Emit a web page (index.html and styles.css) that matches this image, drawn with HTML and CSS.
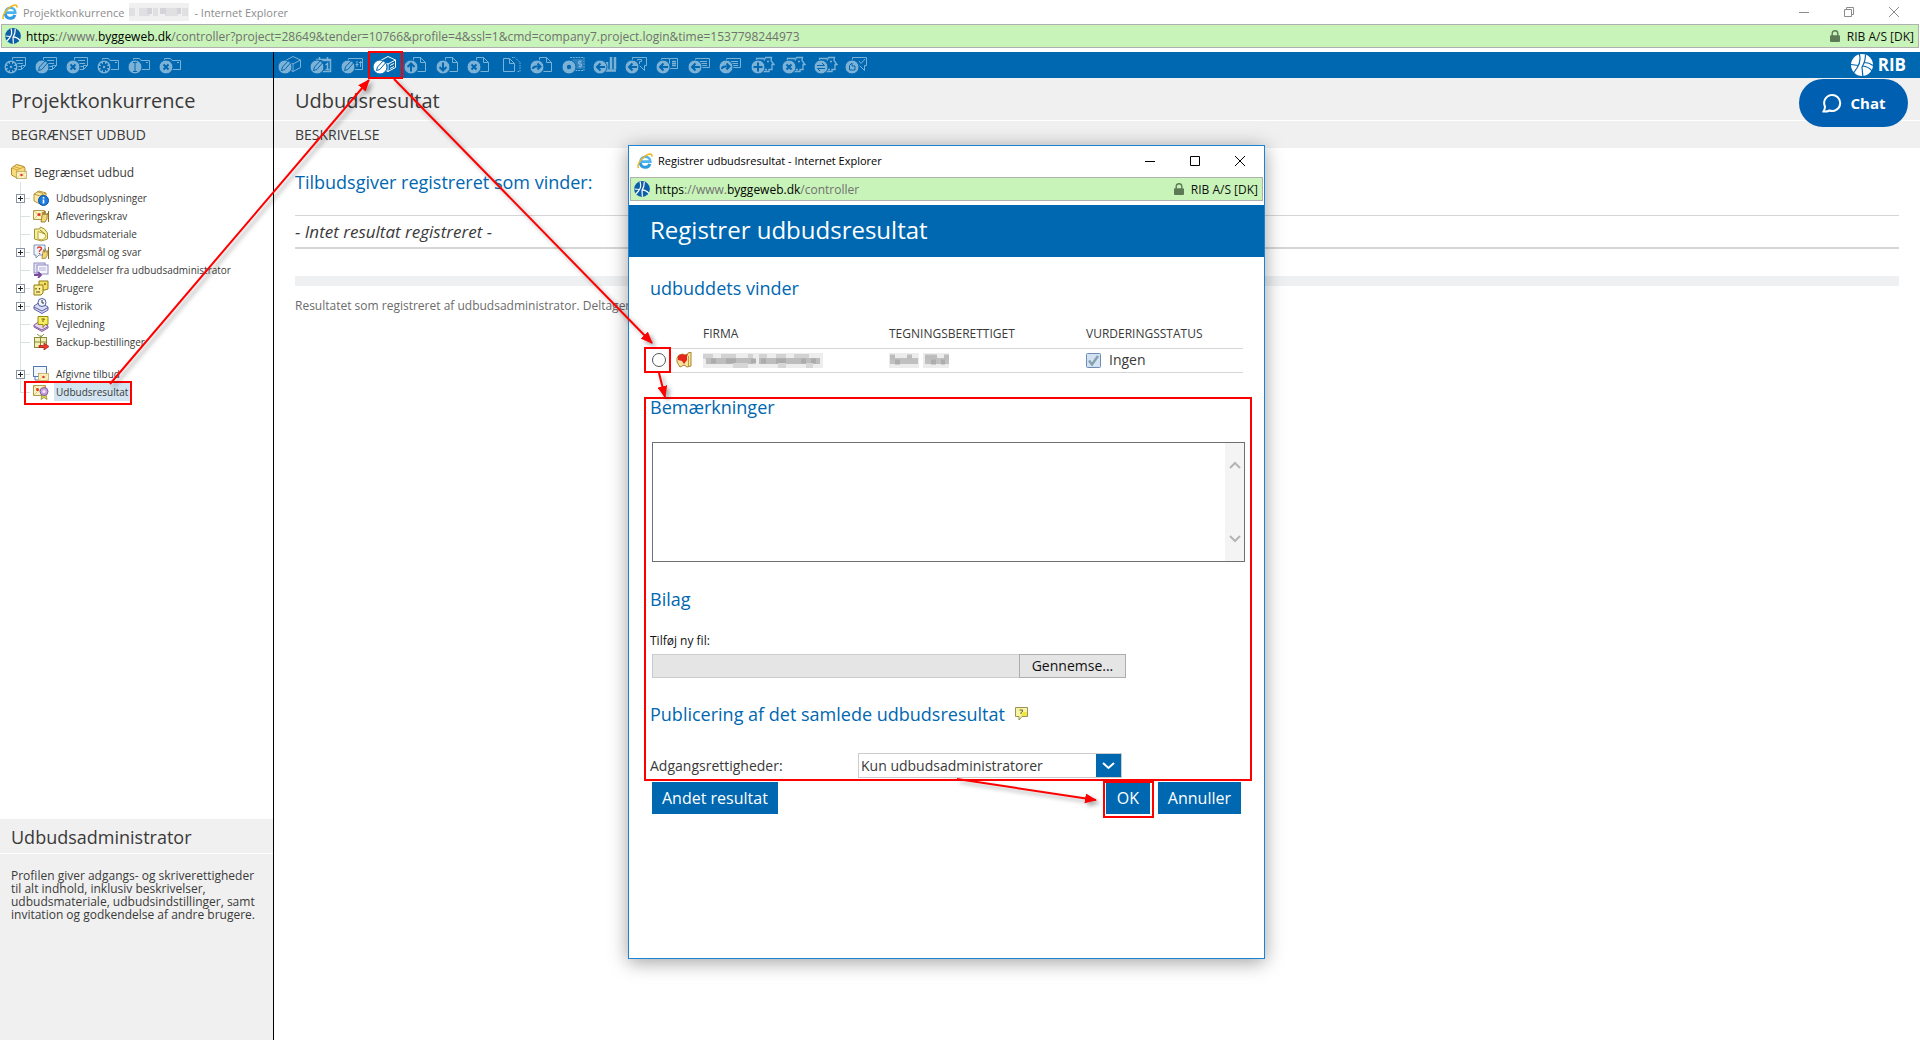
FILE: index.html
```html
<!DOCTYPE html>
<html lang="da">
<head>
<meta charset="utf-8">
<title>Projektkonkurrence - Internet Explorer</title>
<link rel="stylesheet" href="styles.css">
</head>
<body>
<svg class="defs" aria-hidden="true">
  <defs>
    <symbol id="ie" viewBox="0 0 16 16">
      <path d="M3.400 9.500a4.800 4.800 0 0 0 9.400 1.400" fill="none" stroke="#2f9be0" stroke-width="3"/>
      <path d="M3.500 8.600a4.900 4.900 0 0 1 9.800 0z" fill="none" stroke="#4cb4ee" stroke-width="2.600"/>
      <path d="M1.600 15C-.6 12.600 3.500 6 8 3.200S15.300 .3 15 3.600" fill="none" stroke="#f2b61c" stroke-width="1.500"/>
    </symbol>
    <symbol id="globe" viewBox="0 0 16 16">
      <circle cx="8" cy="8" r="7.900" fill="#0b5ea8"/>
      <path d="M6 .5C7.200 4 7 7 4.500 10L2 13M10.300 .8C10.300 4 10 6.500 8 9.300L8.400 15.800M8.300 8.800C11 9 13.500 10.500 15 12.500M5.500 8.500L.5 8" fill="none" stroke="#fff" stroke-width="1.200"/>
    </symbol>
    <symbol id="lock" viewBox="0 0 10 12"><path d="M2.200 6V3.500a2.800 2.800 0 0 1 5.600 0V6" fill="none" stroke="#5d7a57" stroke-width="1.400"/><rect y="5.200" width="10" height="6.800" rx="1" fill="#5d7a57"/></symbol>

    <!-- toolbar: outlines behind the round badge -->
    <symbol id="b-note" viewBox="0 0 24 18"><path d="M8.500 7V1.500h13v8l-4 4h-5M21.500 9.500h-4v4M12 4.500h7M13 7.500h6M14 10.500h3" /></symbol>
    <symbol id="b-folder" viewBox="0 0 24 18"><path d="M5.500 5V2.500h6l1.500 2h8.500v9h-8M18 6.500h2" /></symbol>
    <symbol id="b-box" viewBox="0 0 24 18"><path d="M7.500 4.500l7.500-4 7.500 3.500v7.500L15 15.500l-2-1M7.500 4.500L15 8l7.500-4M15 8v7.500" /></symbol>
    <symbol id="b-cal" viewBox="0 0 24 18"><path d="M6.500 6V3.500h14v12h-8M9.500 1v3M17.500 1v3M7 4.500h13" stroke-width="1.500"/><path d="M15.500 9l2-1.500v6M15.500 13.500h4" stroke-width="1.500"/></symbol>
    <symbol id="b-slide" viewBox="0 0 24 18"><path d="M7.500 5V2.500h14v11h-8M16 5v6M14.500 8.500h3M19.500 5v6M18 6.500h3" /></symbol>
    <symbol id="b-page" viewBox="0 0 24 18"><path d="M9.500 5V1.500h7l5 5v9h-8M16.500 1.500v5h5" /></symbol>
    <symbol id="b-copy" viewBox="0 0 24 18"><path d="M4.500 2.500h6l5 5v8h-11zM10.500 2.500v5h5"/><path d="M13 1.500h3l5 5v9h-3" stroke-dasharray="1.500 1"/></symbol>
    <symbol id="b-money" viewBox="0 0 24 18"><path d="M8 1.500h14v13H12" stroke-dasharray="2 .8"/><path d="M10 3h11v10H11z" fill="currentColor" fill-opacity=".35" stroke="none"/><path d="M19.500 5.500h-3v2.500h3v2.500h-3M18 4v8" /></symbol>
    <symbol id="b-bars" viewBox="0 0 24 18"><path d="M14 13V6M18 13V1M22 13V1M11 14.500h12" stroke-width="2.500"/></symbol>
    <symbol id="b-ask" viewBox="0 0 24 18"><path d="M7.500 5V1.500h14v8h-2v5l-5-5M12.500 4.500V3.500h4v2h-2V8" /></symbol>
    <symbol id="b-book" viewBox="0 0 24 18"><path d="M5.500 5V2.500h8v9M13.500 2.500h8v10h-8" /><path d="M16 5.500h4M16 7.500h4M16 9.500h4" stroke-width="1.400"/></symbol>
    <symbol id="b-msg" viewBox="0 0 24 18"><path d="M7.500 5V2.500h14v9h-8M12 5.500h7M13 7.500h6M14 9.500h5" /></symbol>
    <symbol id="b-head" viewBox="0 0 24 18"><path d="M5.500 5V2.500h7.500M13 4.500l1.500-3h6l-.5 3 3 4h-2v5h-3v2h-6M16 5.500h2M12 13.500h4" stroke-width="1.300"/></symbol>
    <symbol id="b-ok" viewBox="0 0 24 18"><path d="M7.500 5V1.500h14v8h-2v5l-5-5M14 5l2 2.500 4-4.500" /></symbol>

    <!-- toolbar: round badges -->
    <symbol id="d-pen" viewBox="0 0 24 18"><circle class="disc" cx="7" cy="11" r="7"/><path class="cut thin" d="M3.500 14.500l1-3.500 6.500-7 2.300 2-6.500 7.500z"/></symbol>
    <symbol id="d-gear" viewBox="0 0 24 18"><circle class="disc" cx="7" cy="11" r="7"/><circle class="cut" cx="7" cy="11" r="2.200"/><path class="cut" d="M7 6v2M7 14v2M2 11h2M10 11h2M3.500 7.500l1.400 1.400M9.100 13.100l1.400 1.400M10.500 7.500L9.100 8.900M4.900 13.100l-1.400 1.400"/></symbol>
    <symbol id="d-x" viewBox="0 0 24 18"><circle class="disc" cx="7" cy="11" r="7"/><path class="cut" d="M4.500 8.500l5 5M9.500 8.500l-5 5"/></symbol>
    <symbol id="d-i" viewBox="0 0 24 18"><circle class="disc" cx="7" cy="11" r="7"/><path class="cut thin" d="M5 6.500h4M5 15.500h4M7 6.500v9"/></symbol>
    <symbol id="d-up" viewBox="0 0 24 18"><circle class="disc" cx="7" cy="11" r="7"/><path class="cut" d="M7 15.500V8M3.500 11L7 7.500l3.500 3.500"/></symbol>
    <symbol id="d-down" viewBox="0 0 24 18"><circle class="disc" cx="7" cy="11" r="7"/><path class="cut" d="M7 6.500V14M3.500 11L7 14.500l3.500-3.500"/></symbol>
    <symbol id="d-right" viewBox="0 0 24 18"><circle class="disc" cx="7" cy="11" r="7"/><path class="cut" d="M3 13c0-2 1-2.500 3-2.500h3.500M7.500 7.500l3 3-3 3"/></symbol>
    <symbol id="d-left" viewBox="0 0 24 18"><circle class="disc" cx="7" cy="11" r="7"/><path class="cut" d="M12 11H4.500M7.500 7.500L4 11l3.500 3.500"/></symbol>
    <symbol id="d-dot" viewBox="0 0 24 18"><circle class="disc" cx="7" cy="11" r="7"/><circle class="cut" cx="7" cy="11" r="1.200"/></symbol>
    <symbol id="d-plus" viewBox="0 0 24 18"><circle class="disc" cx="7" cy="11" r="7"/><path class="cut" d="M7 6.500v9M2.500 11h9"/></symbol>
    <symbol id="d-swap" viewBox="0 0 24 18"><circle class="disc" cx="7" cy="11" r="7"/><path class="cut thin" d="M3 9.500h7.500L8 7M11 12.500H3.500L6 15"/></symbol>
    <symbol id="d-hand" viewBox="0 0 24 18"><circle class="disc" cx="7" cy="11" r="7"/><path class="cut thin" d="M4.500 14V9.500L7 7v3h3v4z"/></symbol>

    <!-- tree icons -->
    <symbol id="t-env" viewBox="0 0 16 12"><rect x=".5" y=".5" width="15" height="11" fill="#fbf3c4" stroke="#b39a4a"/><path d="M1 1l7 6 7-6M1 11l5-5M15 11l-5-5" fill="none" stroke="#dcc87a"/><circle cx="8" cy="6" r="1.800" fill="#e3341f"/></symbol>
    <symbol id="t-root" viewBox="0 0 16 16"><path d="M.5 4l5-3.500L13 2.500l1 2v5L6 14 .5 11z" fill="#f8dc7c" stroke="#b5882c"/><path d="M1 4l5 2 7-3M3 2.500l6 2M6 6v7" fill="none" stroke="#d5a83c"/><use href="#t-env" x="5" y="7" width="11" height="8"/></symbol>
    <symbol id="t-info" viewBox="0 0 16 16"><path d="M1 4l5-3 7 2v7l-6 4-6-3z" fill="#fbe9a6" stroke="#b5953c"/><path d="M1 4l6 2 6-3M4 1.500l6 2" fill="none" stroke="#b5953c"/><circle cx="10.500" cy="10.500" r="5" fill="#1c7be0" stroke="#0b4fa5"/><path d="M10.500 7v1.500M10.500 9.500v4" stroke="#fff" stroke-width="1.600"/></symbol>
    <symbol id="t-hand" viewBox="0 0 8 12"><path d="M1 11L2 5l1-4 1 3 1-4 1 4 1.500-2-.5 6-2 3z" fill="#f3d976" stroke="#8c6d1c" stroke-width=".8"/></symbol>
    <symbol id="t-req" viewBox="0 0 16 16"><path d="M.5 2.500h11v9H.5z" fill="#fbf3c4" stroke="#b39a4a"/><path d="M1 3l5 4 5-4M1 11l4-4M11 11L7 7" fill="none" stroke="#dcc87a"/><circle cx="6" cy="6.500" r="1.500" fill="#e3341f"/><use href="#t-hand" x="7" y="3" width="8" height="12"/><path d="M15.500 3v11" stroke="#8c6d1c"/></symbol>
    <symbol id="t-mat" viewBox="0 0 16 16"><path d="M1.500 3h5l1-2 4 2 3 4v6l-6 2-7-2z" fill="#f6ee9f" stroke="#a29436"/><path d="M5 5.500l7 2.500 1 3-4 3-4-1z" fill="#fffbd6" stroke="#b9a743"/><path d="M7 4l5 4" stroke="#8c7d2b"/></symbol>
    <symbol id="t-qa" viewBox="0 0 16 16"><path d="M1 1h11v10H6l-3 3v-3H1z" fill="#edf3fb" stroke="#7d94b5"/><path d="M4.500 4.500C4.500 2.500 8.500 2.500 8.500 5L6.500 7v1M6.500 9v1" fill="none" stroke="#e03a2e" stroke-width="1.400"/><use href="#t-hand" x="8" y="4" width="7" height="12"/><path d="M15.500 3v12" stroke="#8c6d1c"/></symbol>
    <symbol id="t-news" viewBox="0 0 16 16"><rect x="1" y="1" width="11" height="10" fill="#e6e4f5" stroke="#8e8abf"/><rect x="4" y="3" width="11" height="9" fill="#f6f6ff" stroke="#8e8abf"/><path d="M6 6h7M6 8h7" stroke="#b3b0d8"/><path d="M1 13h6M5 10l3 3-3 3" fill="none" stroke="#7b4a9c" stroke-width="1.800"/></symbol>
    <symbol id="t-users" viewBox="0 0 16 16"><path d="M6 1h9v8l-3 1H6z" fill="#f7e163" stroke="#8f7a14"/><path d="M1 5h9v8l-2 2H1z" fill="#fbee95" stroke="#8f7a14"/><path d="M3 8v1.500M6.500 8v1.500M3 12h4M12 3v2" stroke="#57490a" stroke-width="1.200"/></symbol>
    <symbol id="t-hist" viewBox="0 0 16 16"><path d="M1 8l6-4 8 5v3l-6 3.500L1 11z" fill="#d9dbf3" stroke="#5b61a8"/><path d="M1 9l8 4 6-3.500" fill="none" stroke="#5b61a8"/><circle cx="9" cy="4.500" r="4" fill="#f2f5fc" stroke="#4b5f9e"/><path d="M9 2v3h2" fill="none" stroke="#333"/></symbol>
    <symbol id="t-guide" viewBox="0 0 16 16"><path d="M1 9l6-4 8 5v2l-6 3.500L1 11z" fill="#e6d4ef" stroke="#845a9e"/><path d="M1 10l8 4 6-3.500" fill="none" stroke="#845a9e"/><path d="M5 .5h10v8h-3l-2 3v-3H5z" fill="#f6ee5e" stroke="#958a17"/><path d="M8.500 3h3L10 4.500V6" fill="none" stroke="#5c5508"/></symbol>
    <symbol id="t-backup" viewBox="0 0 16 16"><path d="M4 0l4 3 3-3M8 1v3" fill="none" stroke="#8e9a4a"/><rect x="1.500" y="3.500" width="12" height="10" fill="#f4efb5" stroke="#8a8a3f"/><path d="M1 8h13M7.500 4v9" stroke="#8a8a3f"/><path d="M6 11.500h5V9l5 3.500-5 3.500v-2.500H6z" fill="#ef3a2d" stroke="#a51b12" stroke-width=".7"/></symbol>
    <symbol id="t-offers" viewBox="0 0 16 16"><rect x=".5" y=".5" width="13" height="10" fill="#f1f6fd" stroke="#5579ad"/><path d="M2 11v3h3" fill="none" stroke="#5579ad"/><use href="#t-env" x="5" y="7" width="11" height="8"/></symbol>
    <symbol id="t-result" viewBox="0 0 16 16"><path d="M.5 1.500h12v10H.5z" fill="#fbf3c4" stroke="#b39a4a"/><path d="M1 2l5 5 6-5M1 11l4-4" fill="none" stroke="#dcc87a"/><circle cx="4.500" cy="5.500" r="1.500" fill="#e3341f"/><path d="M9 10l-1 5.500 3-2 3 2-1-5.500z" fill="#d9d052" stroke="#8b8423" stroke-width=".7"/><circle cx="11" cy="7.500" r="4" fill="#c8a2dd" stroke="#815b9b"/><circle cx="11" cy="7.500" r="1.600" fill="#f0e1f8"/></symbol>
    <symbol id="i-firm" viewBox="0 0 16 16"><path d="M1 6l2-3 4-1 4 2 1-3 3-1v14l-4 1-3-2-4 2-3-5z" fill="#f7e3a0" stroke="#a9822d"/><path d="M2 4l4-2 2 1 3-1v6l-3 4-2-3-4-1z" fill="#e5261b"/><path d="M12.500 4v10" stroke="#c19a3a"/></symbol>
  </defs>
</svg>

<header class="titlebar titlebar-main">
  <svg class="ico16"><use href="#ie"/></svg>
  <span>Projektkonkurrence</span>
  <svg class="mask-title" viewBox="0 0 60 18"><rect width="60" height="18" fill="#f0f0f1"/><path d="M0 9h60" stroke="#e0e0e3" stroke-width="8" stroke-dasharray="6 4 11 3 5 7 13 4"/><path d="M18 8h42" stroke="#d3d4d9" stroke-width="6" stroke-dasharray="5 8 6 11 4 9"/></svg>
  <span class="grow">- Internet Explorer</span>
  <div class="winbtns">
    <button type="button" aria-label="Minimer"><svg viewBox="0 0 10 10"><path d="M0 5.500h10"/></svg></button>
    <button type="button" aria-label="Gendan"><svg viewBox="0 0 10 10"><path d="M.5 2.500h7v7h-7zM2.500 2.500v-2h7v7h-2"/></svg></button>
    <button type="button" aria-label="Luk"><svg viewBox="0 0 10 10"><path d="M0 0l10 10M10 0L0 10"/></svg></button>
  </div>
</header>
<div class="address">
  <svg class="ico16"><use href="#globe"/></svg>
  <span class="url"><span class="k">https</span>://www.<span class="k">byggeweb.dk</span>/controller?project=28649&amp;tender=10766&amp;profile=4&amp;ssl=1&amp;cmd=company7.project.login&amp;time=1537798244973</span>
  <svg class="lock"><use href="#lock"/></svg><span class="cert">RIB A/S [DK]</span>
</div>

<div class="app">
  <aside class="side">
    <nav class="tools tools-side" aria-label="Projekt">
      <button type="button"><svg><use href="#b-note"/><use href="#d-gear"/></svg></button>
      <button type="button"><svg><use href="#b-note"/><use href="#d-pen"/></svg></button>
      <button type="button"><svg><use href="#b-note"/><use href="#d-x"/></svg></button>
      <button type="button"><svg><use href="#b-folder"/><use href="#d-gear"/></svg></button>
      <button type="button"><svg><use href="#b-folder"/><use href="#d-i"/></svg></button>
      <button type="button"><svg><use href="#b-folder"/><use href="#d-x"/></svg></button>
    </nav>
    <h1 class="band-title">Projektkonkurrence</h1>
    <div class="band-sub">BEGRÆNSET UDBUD</div>
    <div class="tree">
      <a class="root" href="#"><svg class="ico16"><use href="#t-root"/></svg>Begrænset udbud</a>
      <ul>
        <li><button class="exp" type="button" aria-label="Udvid"></button><svg class="ico16"><use href="#t-info"/></svg><a href="#">Udbudsoplysninger</a></li>
        <li><svg class="ico16"><use href="#t-req"/></svg><a href="#">Afleveringskrav</a></li>
        <li><svg class="ico16"><use href="#t-mat"/></svg><a href="#">Udbudsmateriale</a></li>
        <li><button class="exp" type="button" aria-label="Udvid"></button><svg class="ico16"><use href="#t-qa"/></svg><a href="#">Spørgsmål og svar</a></li>
        <li><svg class="ico16"><use href="#t-news"/></svg><a href="#">Meddelelser fra udbudsadministrator</a></li>
        <li><button class="exp" type="button" aria-label="Udvid"></button><svg class="ico16"><use href="#t-users"/></svg><a href="#">Brugere</a></li>
        <li><button class="exp" type="button" aria-label="Udvid"></button><svg class="ico16"><use href="#t-hist"/></svg><a href="#">Historik</a></li>
        <li><svg class="ico16"><use href="#t-guide"/></svg><a href="#">Vejledning</a></li>
        <li><svg class="ico16"><use href="#t-backup"/></svg><a href="#">Backup-bestillinger</a></li>
        <li class="spaced"><button class="exp" type="button" aria-label="Udvid"></button><svg class="ico16"><use href="#t-offers"/></svg><a href="#">Afgivne tilbud</a></li>
        <li><svg class="ico16"><use href="#t-result"/></svg><a class="on" href="#">Udbudsresultat</a></li>
      </ul>
    </div>
    <section class="role">
      <h2>Udbudsadministrator</h2>
      <p>Profilen giver adgangs- og skriverettigheder til alt indhold, inklusiv beskrivelser, udbudsmateriale, udbudsindstillinger, samt invitation og godkendelse af andre brugere.</p>
    </section>
  </aside>

  <main class="main">
    <div class="topbar">
      <nav class="tools tools-main" aria-label="Udbud">
        <button type="button"><svg><use href="#b-box"/><use href="#d-pen"/></svg></button>
        <button type="button"><svg><use href="#b-cal"/><use href="#d-pen"/></svg></button>
        <button type="button"><svg><use href="#b-slide"/><use href="#d-pen"/></svg></button>
        <button type="button" class="active"><svg><use href="#b-box"/><path d="M17 9.500l4-2M17 12.500l4-2"/><use href="#d-pen"/></svg></button>
        <button type="button"><svg><use href="#b-page"/><use href="#d-up"/></svg></button>
        <button type="button"><svg><use href="#b-page"/><use href="#d-down"/></svg></button>
        <button type="button"><svg><use href="#b-page"/><use href="#d-x"/></svg></button>
        <button type="button"><svg><use href="#b-copy"/></svg></button>
        <button type="button"><svg><use href="#b-page"/><use href="#d-right"/></svg></button>
        <button type="button"><svg><use href="#b-money"/><use href="#d-dot"/></svg></button>
        <button type="button"><svg><use href="#b-bars"/><use href="#d-left"/></svg></button>
        <button type="button"><svg><use href="#b-ask"/><use href="#d-left"/></svg></button>
        <button type="button"><svg><use href="#b-book"/><use href="#d-left"/></svg></button>
        <button type="button"><svg><use href="#b-msg"/><use href="#d-left"/></svg></button>
        <button type="button"><svg><use href="#b-msg"/><use href="#d-right"/></svg></button>
        <button type="button"><svg><use href="#b-head"/><use href="#d-plus"/></svg></button>
        <button type="button"><svg><use href="#b-head"/><use href="#d-x"/></svg></button>
        <button type="button"><svg><use href="#b-head"/><use href="#d-swap"/></svg></button>
        <button type="button"><svg><use href="#b-ok"/><use href="#d-hand"/></svg></button>
      </nav>
      <div class="rib">
        <svg viewBox="0 0 22 22"><circle cx="11" cy="11" r="11" fill="#fff"/><path d="M8.300 0C9.800 5 9 9.500 6 14L2.500 19M14.500 .5C14.500 5 13.500 9 11 13l.8 9M11.500 12c3.500 .2 7.500 2.500 9.500 5M7.500 11.500L0 10.500M13.500 8.500c3 0 6 1 8.500 3" fill="none" stroke="#0067b1" stroke-width="1.200"/></svg>
        <b>RIB</b>
      </div>
    </div>
    <h1 class="band-title">Udbudsresultat</h1>
    <div class="band-sub">BESKRIVELSE</div>
    <div class="content">
      <h2>Tilbudsgiver registreret som vinder:</h2>
      <p class="none">- Intet resultat registreret -</p>
      <div class="greybar"></div>
      <p class="hint">Resultatet som registreret af udbudsadministrator. Deltagerne</p>
    </div>
  </main>
</div>

<button class="chat" type="button"><svg viewBox="0 0 20 20"><path d="M3 13.500A8 8 0 1 1 7.500 17.500C5.500 18.500 3.500 18.800 1.500 18.500 2.500 17 3 15.500 3 13.500z"/></svg>Chat</button>

<div class="popup" role="dialog" aria-labelledby="dlg-title">
  <div class="titlebar">
    <svg class="ico16"><use href="#ie"/></svg>
    <span class="grow">Registrer udbudsresultat - Internet Explorer</span>
    <div class="winbtns">
      <button type="button" aria-label="Minimer"><svg viewBox="0 0 10 10"><path d="M0 5.500h10"/></svg></button>
      <button type="button" aria-label="Maksimer"><svg viewBox="0 0 10 10"><path d="M.5 .5h9v9h-9z"/></svg></button>
      <button type="button" aria-label="Luk"><svg viewBox="0 0 10 10"><path d="M0 0l10 10M10 0L0 10"/></svg></button>
    </div>
  </div>
  <div class="address">
    <svg class="ico16"><use href="#globe"/></svg>
    <span class="url"><span class="k">https</span>://www.<span class="k">byggeweb.dk</span>/controller</span>
    <svg class="lock"><use href="#lock"/></svg><span class="cert">RIB A/S [DK]</span>
  </div>
  <h1 id="dlg-title">Registrer udbudsresultat</h1>
  <form class="form">
    <h2>udbuddets vinder</h2>
    <table>
      <colgroup><col class="c-radio"><col class="c-icon"><col class="c-firm"><col class="c-sign"><col></colgroup>
      <thead><tr><th></th><th></th><th>FIRMA</th><th>TEGNINGSBERETTIGET</th><th>VURDERINGSSTATUS</th></tr></thead>
      <tbody><tr>
        <td><input type="radio" name="vinder" aria-label="Vælg vinder"></td>
        <td><svg class="ico16"><use href="#i-firm"/></svg></td>
        <td><svg class="mask-firm" viewBox="0 0 120 15"><rect width="120" height="15" fill="#ededed"/><path d="M0 3.500h112" stroke="#d2d2d2" stroke-width="5" stroke-dasharray="10 8 15 12 5 6 8 9"/><path d="M3 8h47M56 8h61" stroke="#bdbdbd" stroke-width="6"/><path d="M8 8h108" stroke="#acacac" stroke-width="5" stroke-dasharray="5 10 10 15 5 5"/><path d="M30 12.500h80" stroke="#d6d6d6" stroke-width="5" stroke-dasharray="15 30 8 20"/></svg></td>
        <td><svg class="mask-sign" viewBox="0 0 60 15"><path d="M0 7.500h30M34 7.500h26" stroke="#ececec" stroke-width="15"/><path d="M1 8h28M36 8h24" stroke="#c0c0c0" stroke-width="6"/><path d="M1 4h5M18 4h5M36 4h12M55 4h5" stroke="#bdbdbd" stroke-width="5"/><path d="M6 9h5M42 9h5M52 9h4" stroke="#adadad" stroke-width="5"/></svg></td>
        <td><span class="status"><svg viewBox="0 0 15 15"><rect x=".5" y=".5" width="14" height="14" rx="1" fill="#d3e2f3" stroke="#6f8db3"/><path d="M3 7.500l3 4 6-8.500" fill="none" stroke="#87a0ad" stroke-width="2.400"/></svg>Ingen</span></td>
      </tr></tbody>
    </table>
    <h2><label for="note">Bemærkninger</label></h2>
    <div class="note">
      <textarea id="note"></textarea>
      <div class="scroll"><svg viewBox="0 0 12 8"><path d="M1 7l5-5 5 5"/></svg><svg viewBox="0 0 12 8"><path d="M1 1l5 5 5-5"/></svg></div>
    </div>
    <h2>Bilag</h2>
    <label class="filelabel" for="file">Tilføj ny fil:</label>
    <div class="file"><input id="file" type="text" readonly><button type="button">Gennemse...</button></div>
    <h2 class="pub">Publicering af det samlede udbudsresultat
      <svg viewBox="0 0 13 14"><path d="M.5 .5h12v9H7l-3 3.500v-3.500H.5z" fill="#f8f5a0" stroke="#98935a"/><path d="M8 5h4v4H6z" fill="#f0e840"/><path d="M4.500 3h3v1.500L6 5.500V7" fill="none" stroke="#5e5b3a"/></svg></h2>
    <div class="access">
      <label for="acc">Adgangsrettigheder:</label>
      <div class="select"><select id="acc"><option>Kun udbudsadministratorer</option></select><svg viewBox="0 0 25 23"><path d="M7 9l5.500 5L18 9"/></svg></div>
    </div>
    <div class="actions">
      <button type="button">Andet resultat</button>
      <span class="grow"></span>
      <button type="submit">OK</button>
      <button type="button">Annuller</button>
    </div>
  </form>
</div>

<!-- step markers and arrows drawn over the windows -->
<svg class="marks" aria-hidden="true">
  <defs><marker id="tip" markerUnits="userSpaceOnUse" markerWidth="13" markerHeight="10" refX="11" refY="5" orient="auto"><path d="M0 0l12 5-12 5z" fill="#f00"/></marker></defs>
  <g fill="none" stroke="#f00" stroke-width="2">
    <rect x="369" y="52" width="33" height="26"/>
    <rect x="25" y="382" width="106" height="22"/>
    <rect x="645" y="348" width="25" height="24"/>
    <rect x="645" y="398" width="606" height="382"/>
    <rect x="1104" y="782" width="49" height="35"/>
  </g>
  <g class="arrows" fill="none" stroke="#f00" stroke-width="2">
    <path d="M110 384L369 80" marker-end="url(#tip)"/>
    <path d="M394 79L652 343" marker-end="url(#tip)"/>
    <path d="M659 373l6 24" marker-end="url(#tip)"/>
    <path d="M957 779l139 21" marker-end="url(#tip)"/>
  </g>
</svg>
</body>
</html>
```

FILE: styles.css
```css
* { box-sizing: border-box; }

body {
  margin: 0;
  min-height: 100vh;
  display: flex;
  flex-direction: column;
  position: relative;
  font-family: "Open Sans", "Noto Sans", sans-serif;
  font-size: 12px;
  color: #3a3a3a;
  background: #fff;
}

h1, h2, p, ul { margin: 0; padding: 0; font-weight: 400; }
button { font: inherit; border: 0; padding: 0; background: none; color: inherit; }
a { color: inherit; text-decoration: none; }
.defs { position: absolute; width: 0; height: 0; }
.ico16 { width: 16px; height: 16px; flex: none; }
.grow { flex: 1; }

/* window chrome */
.titlebar { display: flex; align-items: center; height: 31px; padding: 0 2px 2px 8px; gap: 5px; color: #000; font-size: 11px; }
.titlebar-main { height: 24px; padding: 0 4px 0 2px; color: #8c8c8c; }
.mask-title { width: 60px; height: 18px; }
.winbtns { display: flex; }
.winbtns button { width: 45px; height: 24px; display: grid; place-items: center; }
.winbtns svg { width: 10px; height: 10px; fill: none; stroke: currentColor; }

.address {
  display: flex;
  align-items: center;
  height: 24px;
  margin: 0 1px 4px;
  padding: 0 4px 0 3px;
  border: 1px solid #b0b0b0;
  background: #c8f4b9;
}
.url { flex: 1; padding-left: 5px; color: #707070; }
.k { color: #000; }
.lock { width: 10px; height: 12px; margin-right: 7px; }
.cert { color: #111; }

/* application */
.app { flex: 1; display: flex; }
.side { width: 274px; flex: none; display: flex; flex-direction: column; border-right: 1px solid #000; }
.main { flex: 1; min-width: 0; }

.tools, .topbar { height: 26px; background: #0067b1; }
.tools { display: flex; align-items: center; padding: 0 4px; }
.tools button { flex: none; width: 24px; height: 18px; }
.tools svg { display: block; width: 24px; height: 18px; fill: none; stroke: currentColor; color: #7db2d7; overflow: visible; }
.tools .active svg { color: #fff; }
.tools-side { gap: 7px; }
.tools-main { width: 599px; justify-content: space-between; }
.disc { fill: currentColor; stroke: #0067b1; stroke-width: 1; }
.cut { stroke: #0067b1; stroke-width: 2; fill: none; }
.thin { stroke-width: 1; }
.topbar { display: flex; justify-content: space-between; align-items: center; padding-right: 14px; }
.rib { display: flex; align-items: center; gap: 5px; color: #fff; font-size: 17px; line-height: 24px; }
.rib svg { width: 22px; height: 22px; }

.band-title { height: 43px; padding: 0 11px; border-bottom: 1px solid #fff; background: #f0f0f0; font-size: 20px; line-height: 45px; }
.band-sub { height: 27px; padding: 0 11px; background: #f0f0f0; font-size: 14px; line-height: 28px; }
.main .band-title, .main .band-sub { padding-left: 21px; }

.tree { flex: 1; padding: 14px 11px; }
.root { display: flex; align-items: center; gap: 7px; height: 20px; font-size: 12px; }
.tree ul { list-style: none; margin: 7px 0 0 9px; font-size: 10px; position: relative; }
.tree ul::before { content: ""; position: absolute; left: 0; top: -7px; bottom: 9px; border-left: 1px solid #d9e2e2; }
.tree li { position: relative; display: flex; align-items: center; height: 18px; padding-left: 13px; gap: 5px; white-space: nowrap; }
.tree li::before { content: ""; position: absolute; left: 0; top: 9px; width: 10px; border-top: 1px solid #d9e2e2; }
.tree .spaced { margin-top: 14px; }
.tree li a { padding: 0 2px; line-height: 18px; }
.tree a.on { background: #d2e5f0; }
.exp {
  position: absolute;
  left: -4px;
  top: 5px;
  width: 9px;
  height: 9px;
  border: 1px solid #8a93a5;
  background:
    linear-gradient(#222, #222) center / 5px 1px no-repeat,
    linear-gradient(#222, #222) center / 1px 5px no-repeat,
    #fff;
}

.role { min-height: 221px; background: #f0f0f0; }
.role h2 { height: 35px; padding-left: 11px; border-bottom: 1px solid #fff; font-size: 18px; line-height: 36px; }
.role p { padding: 15px 11px; font-size: 12px; line-height: 13px; }

.content { padding: 22px 21px; }
.content h2, .form h2 { font-size: 18px; line-height: 24px; color: #0067b1; }
.none { margin-top: 21px; border-top: 1px solid #d6d6d6; border-bottom: 2px solid #d6d6d6; font-size: 17px; line-height: 31px; font-style: italic; }
.greybar { height: 10px; margin-top: 27px; background: #eff0f2; }
.hint { margin-top: 12px; line-height: 16px; color: #6b6b6b; }

.chat {
  position: absolute;
  right: 12px;
  top: 79px;
  width: 109px;
  height: 48px;
  display: flex;
  align-items: center;
  justify-content: center;
  gap: 9px;
  border-radius: 24px;
  background: #005fb0;
  color: #fff;
  font-size: 15px;
  font-weight: 700;
}
.chat svg { width: 20px; height: 20px; fill: none; stroke: #fff; stroke-width: 2; }

/* popup window */
.popup {
  position: absolute;
  left: 628px;
  top: 145px;
  width: 637px;
  min-height: 814px;
  border: 1px solid #1883d7;
  background: #fff;
  box-shadow: 0 3px 18px rgba(0, 0, 0, .38);
}
.popup h1 { height: 52px; padding-left: 21px; background: #0067b1; color: #fff; font-size: 24px; line-height: 50px; }
.form { padding: 19px 21px; }
.form table { width: 100%; margin: 20px 0 22px; border-collapse: collapse; table-layout: fixed; }
.form th, .form td { padding: 0; text-align: left; vertical-align: middle; font-weight: 400; border-bottom: 1px solid #d6d6d6; }
.form th { height: 28px; font-size: 12px; }
.form td { height: 24px; }
.form td svg { display: block; }
.c-radio { width: 26px; }
.c-icon { width: 27px; }
.c-firm { width: 186px; }
.c-sign { width: 197px; }
.form input[type="radio"] { appearance: none; display: block; width: 14px; height: 14px; margin: 0 0 0 2px; border: 1px solid #555; border-radius: 50%; background: #fff; }
.mask-firm { width: 120px; height: 15px; }
.mask-sign { width: 60px; height: 15px; }
.status { display: flex; align-items: center; gap: 8px; font-size: 14px; line-height: 20px; }
.form .status svg { width: 15px; height: 15px; }

.note { display: flex; height: 120px; margin: 23px -2px 25px 2px; border: 1px solid #707070; }
.note textarea { flex: 1; border: 0; resize: none; overflow: hidden; font: inherit; }
.scroll { width: 19px; background: #f4f4f4; display: flex; flex-direction: column; justify-content: space-between; align-items: center; padding: 18px 0; }
.scroll svg { width: 12px; height: 8px; fill: none; stroke: #b5b5b5; stroke-width: 2; }
.filelabel { display: block; margin-top: 22px; line-height: 16px; color: #111; }
.file { display: flex; height: 24px; margin: 5px 0 24px 2px; }
.file input { width: 367px; border: 1px solid #ccc; border-right: 0; background: #e5e5e5; }
.file button { width: 107px; border: 1px solid #adadad; background: #e5e5e5; font-size: 14px; line-height: 20px; color: #111; }
.pub { display: flex; align-items: center; gap: 10px; }
.pub svg { width: 13px; height: 14px; }
.access { display: flex; align-items: center; height: 25px; margin-top: 27px; font-size: 14px; }
.access label { width: 208px; }
.select { display: flex; width: 264px; height: 25px; border: 1px solid #ccc; }
.select select { appearance: none; flex: 1; min-width: 0; border: 0; padding: 0 2px; background: #fff; font: inherit; color: inherit; }
.select svg { width: 25px; height: 23px; background: #0067b1; fill: none; stroke: #fff; stroke-width: 2; }
.actions { display: flex; margin: 4px 2px 0; gap: 8px; }
.actions button { min-width: 44px; height: 32px; padding: 0 10px; background: #0067b1; color: #fff; font-size: 16px; line-height: 32px; }

.marks { position: absolute; left: 0; top: 0; width: 1280px; height: 960px; pointer-events: none; }
.arrows { filter: drop-shadow(3px 3px 2px rgba(0, 0, 0, .35)); }
```
